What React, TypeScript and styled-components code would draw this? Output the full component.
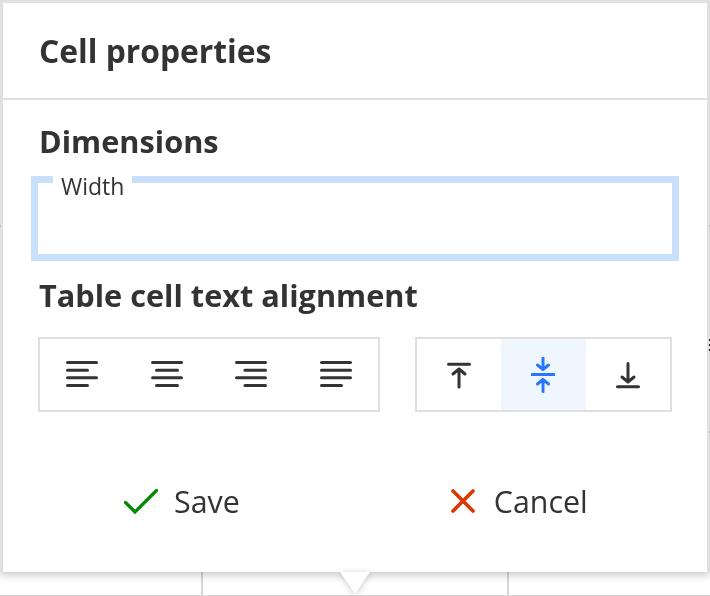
import React from 'react'
import styled, { createGlobalStyle } from 'styled-components'

const GlobalStyle = createGlobalStyle`
  html, body {
    margin: 0;
    padding: 0;
    background: #fff;
    overflow: hidden;
  }
  body {
    font-family: "Open Sans", "Liberation Sans", sans-serif;
    color: #333;
  }
`

const Page = styled.div`
  position: relative;
  width: 710px;
  height: 596px;
  overflow: hidden;
`

const Backdrop = styled.div`
  position: absolute;
  left: 0;
  right: 0;
  bottom: 0;
  height: 24px;
  display: grid;
  grid-template-columns: 203px 306px 1fr;
  border-bottom: 1px solid #d6d6d6;
`

const BackdropCell = styled.div`
  border-right: 2px solid #d6d6d6;
  &:last-child {
    border-right: 0;
  }
`

// bits of the page table that peek out beside the balloon
const EdgeMark = styled.div<{ $left: number; $top: number; $dark?: boolean }>`
  position: absolute;
  z-index: 3;
  left: ${p => p.$left}px;
  top: ${p => p.$top}px;
  width: 1px;
  height: 2px;
  background: ${p => (p.$dark ? '#222' : '#bbb')};
`

const Panel = styled.div`
  position: absolute;
  left: 0;
  top: 0;
  width: 704px;
  height: 569px;
  border: 3px solid #e0e0e0;
  border-bottom: 0;
  background: #fff;
  box-shadow: 0 3px 8px rgba(0, 0, 0, 0.22);
  display: flex;
  flex-direction: column;
`

const Arrow = styled.div`
  position: absolute;
  z-index: 2;
  left: 340px;
  top: 572px;
  width: 30px;
  height: 22px;
  svg {
    display: block;
    overflow: visible;
    filter: drop-shadow(0 1px 3px rgba(0, 0, 0, 0.22));
  }
`

const Header = styled.header`
  height: 95px;
  flex: none;
  display: flex;
  align-items: center;
  padding-left: 36px;
  border-bottom: 2px solid #e0e0e0;
  will-change: transform;
`

const Title = styled.h2`
  margin: 0;
  font-size: 31.8px;
  font-weight: 700;
  line-height: 40px;
`

const Body = styled.div`
  padding: 0 28px;
  display: flex;
  flex-direction: column;
  will-change: transform;
`

const SectionTitle = styled.h3`
  margin: 0;
  padding-left: 8px;
  font-size: 30.7px;
  font-weight: 700;
  line-height: 40px;
`

const DimensionsTitle = styled(SectionTitle)`
  margin-top: 21px;
`

const AlignmentTitle = styled(SectionTitle)`
  margin-top: 14px;
`

const Field = styled.div`
  height: 85px;
  box-sizing: border-box;
  border: 7px solid #c9e0fd;
  position: relative;
  margin-top: 15px;
`

const FieldLabel = styled.label`
  position: absolute;
  left: 15px;
  top: -9px;
  padding: 0 8px;
  background: #fff;
  font-size: 23px;
  line-height: 24px;
  color: #333;
`

const Toolbars = styled.div`
  display: flex;
  gap: 35px;
  margin: 22px 0 0 7px;
`

const Group = styled.div<{ $width: number }>`
  width: ${p => p.$width}px;
  height: 75px;
  box-sizing: border-box;
  border: 2px solid #dfdfdf;
  display: flex;
`

const ToolButton = styled.button<{ $active?: boolean }>`
  flex: 1;
  border: 0;
  padding: 0;
  margin: 0;
  display: flex;
  align-items: center;
  justify-content: center;
  background: ${p => (p.$active ? '#f0f6fe' : '#fff')};
  color: ${p => (p.$active ? '#2977ff' : '#333')};
  svg {
    display: block;
  }
`

const Footer = styled.footer`
  display: flex;
  gap: 211px;
  margin-top: 64px;
  padding-left: 93px;
`

const ActionButton = styled.button`
  height: 50px;
  border: 0;
  background: none;
  padding: 0;
  display: flex;
  align-items: center;
  gap: 16px;
  font-family: inherit;
  font-size: 30.4px;
  color: #333;
  svg {
    display: block;
  }
`

const CancelButton = styled(ActionButton)`
  gap: 19px;
`

const Line = ({ x1, x2, y }: { x1: number; x2: number; y: number }) => (
  <line x1={x1} x2={x2} y1={y} y2={y} stroke="currentColor" strokeWidth="3" strokeLinecap="round" />
)

const ALIGN_ROWS: [number, number][][] = [
  [[1.5, 30.5], [1.5, 21.5], [1.5, 30.5], [1.5, 21.5]],
  [[1.5, 30.5], [5.5, 26.5], [1.5, 30.5], [5.5, 26.5]],
  [[1.5, 30.5], [10, 30.5], [1.5, 30.5], [10, 30.5]],
  [[1.5, 30.5], [1.5, 30.5], [1.5, 30.5], [1.5, 21.5]],
]

const AlignIcon = ({ rows }: { rows: [number, number][] }) => (
  <svg width="32" height="28" viewBox="0 0 32 28">
    {rows.map(([a, b], i) => (
      <Line key={i} x1={a} x2={b} y={1.5 + i * 7.67} />
    ))}
  </svg>
)

const VTopIcon = () => (
  <svg width="24" height="28" viewBox="0 0 24 28" fill="none" stroke="currentColor" strokeWidth="3" strokeLinecap="round" strokeLinejoin="round">
    <path d="M1.5 3.2h21M12 26V8.5M6 13 12 8l6 5" />
  </svg>
)

const VMiddleIcon = () => (
  <svg width="24" height="36" viewBox="0 0 24 36" fill="none" stroke="currentColor" strokeWidth="3" strokeLinecap="round" strokeLinejoin="round">
    <path d="M1 17.5h22M12 1V12M6.5 8 12 12.5 17.5 8M12 34.5V23M6.5 27 12 22.5 17.5 27" />
  </svg>
)

const VBottomIcon = () => (
  <svg width="24" height="28" viewBox="0 0 24 28" fill="none" stroke="currentColor" strokeWidth="3" strokeLinecap="round" strokeLinejoin="round">
    <path d="M1.5 25.8h21M12 2.5v18M6 16 12 21l6-5" />
  </svg>
)

const CheckIcon = () => (
  <svg width="34" height="25" viewBox="0 0 34 25" fill="none" stroke="#008a00" strokeWidth="3.2" strokeLinecap="round" strokeLinejoin="miter">
    <path d="M1.5 13.5 11 23 32.5 1.5" />
  </svg>
)

const CrossIcon = () => (
  <svg width="24" height="24" viewBox="0 0 24 24" fill="none" stroke="#db3700" strokeWidth="3.6" strokeLinecap="round">
    <path d="M2 2 22 22M22 2 2 22" />
  </svg>
)

export default function App() {
  return (
    <Page>
      <GlobalStyle />
      <Backdrop>
        <BackdropCell />
        <BackdropCell />
        <BackdropCell />
      </Backdrop>
      <Panel>
        <Header>
          <Title>Cell properties</Title>
        </Header>
        <Body>
          <DimensionsTitle>Dimensions</DimensionsTitle>
          <Field>
            <FieldLabel>Width</FieldLabel>
          </Field>
          <AlignmentTitle>Table cell text alignment</AlignmentTitle>
          <Toolbars>
            <Group $width={342}>
              {ALIGN_ROWS.map((rows, i) => (
                <ToolButton key={i}>
                  <AlignIcon rows={rows} />
                </ToolButton>
              ))}
            </Group>
            <Group $width={257}>
              <ToolButton><VTopIcon /></ToolButton>
              <ToolButton $active><VMiddleIcon /></ToolButton>
              <ToolButton><VBottomIcon /></ToolButton>
            </Group>
          </Toolbars>
          <Footer>
            <ActionButton><CheckIcon />Save</ActionButton>
            <CancelButton><CrossIcon />Cancel</CancelButton>
          </Footer>
        </Body>
      </Panel>
      <Arrow>
        <svg width="30" height="22" viewBox="0 0 30 22">
          <path d="M0 0 15 22 30 0Z" fill="#fff" />
        </svg>
      </Arrow>
      <EdgeMark $left={0} $top={225} />
      <EdgeMark $left={709} $top={225} />
      <EdgeMark $left={709} $top={339} $dark />
      <EdgeMark $left={709} $top={344} $dark />
      <EdgeMark $left={709} $top={349} $dark />
      <EdgeMark $left={709} $top={431} />
    </Page>
  )
}
